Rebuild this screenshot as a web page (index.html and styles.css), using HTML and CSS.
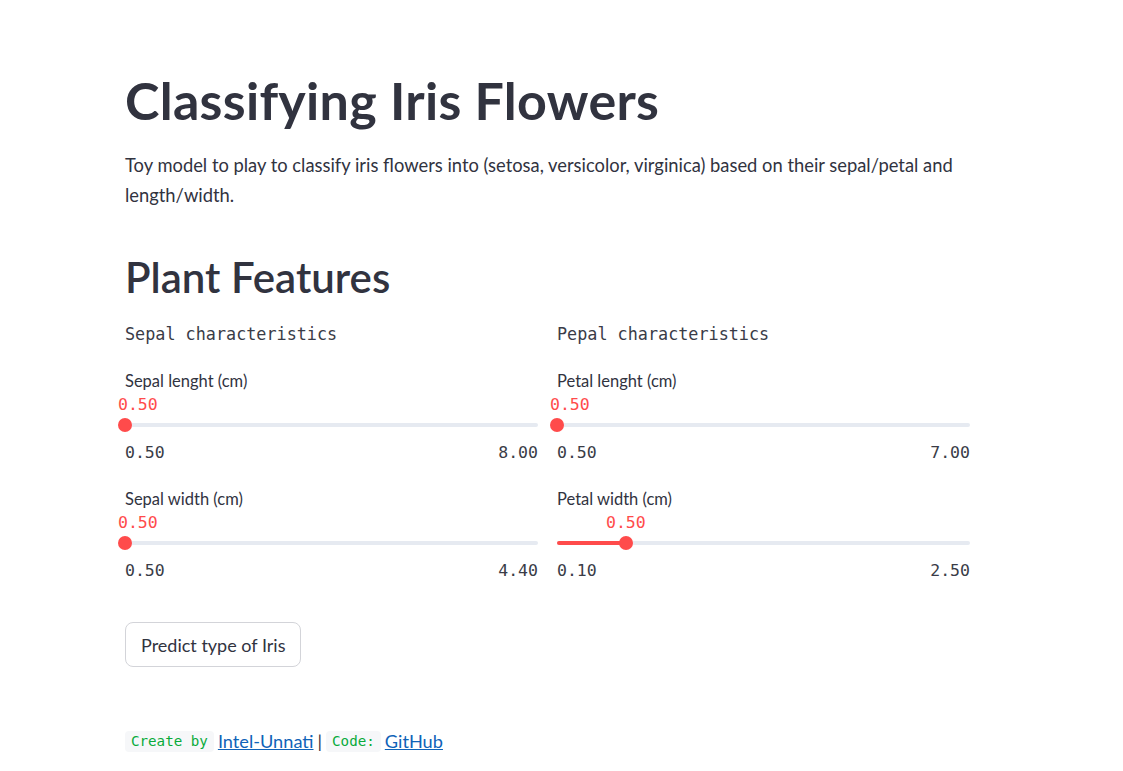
FILE: index.html
```html
<!DOCTYPE html>
<html lang="en">
<head>
<meta charset="utf-8">
<title>Classifying Iris Flowers</title>
<link rel="stylesheet" href="styles.css">
</head>
<body>
<main class="main">
  <h1 class="title">Classifying Iris Flowers</h1>
  <p class="intro">Toy model to play to classify iris flowers into (setosa, versicolor, virginica) based on their sepal/petal and length/width.</p>
  <h2 class="subtitle">Plant Features</h2>
  <div class="columns">
    <section class="col">
      <div class="mono-heading">Sepal characteristics</div>
      <div class="field">
        <div class="field-label">Sepal lenght (cm)</div>
        <div class="value-row"><span class="value" style="left:-7px">0.50</span></div>
        <div class="track-wrap">
          <div class="track"></div>
          <div class="fill" style="width:0px"></div>
          <div class="thumb" style="left:0px"></div>
        </div>
        <div class="ticks"><span>0.50</span><span>8.00</span></div>
      </div>
      <div class="field">
        <div class="field-label">Sepal width (cm)</div>
        <div class="value-row"><span class="value" style="left:-7px">0.50</span></div>
        <div class="track-wrap">
          <div class="track"></div>
          <div class="fill" style="width:0px"></div>
          <div class="thumb" style="left:0px"></div>
        </div>
        <div class="ticks"><span>0.50</span><span>4.40</span></div>
      </div>
    </section>
    <section class="col">
      <div class="mono-heading">Pepal characteristics</div>
      <div class="field">
        <div class="field-label">Petal lenght (cm)</div>
        <div class="value-row"><span class="value" style="left:-7px">0.50</span></div>
        <div class="track-wrap">
          <div class="track"></div>
          <div class="fill" style="width:0px"></div>
          <div class="thumb" style="left:0px"></div>
        </div>
        <div class="ticks"><span>0.50</span><span>7.00</span></div>
      </div>
      <div class="field">
        <div class="field-label">Petal width (cm)</div>
        <div class="value-row"><span class="value" style="left:49px">0.50</span></div>
        <div class="track-wrap">
          <div class="track"></div>
          <div class="fill" style="width:69px"></div>
          <div class="thumb" style="left:69px"></div>
        </div>
        <div class="ticks"><span>0.10</span><span>2.50</span></div>
      </div>
    </section>
  </div>
  <button class="btn" type="button">Predict type of Iris</button>
  <footer class="footer">
    <code class="code">Create by</code>
    <a class="link" href="#">Intel-Unnati</a>
    <span class="sep">|</span>
    <code class="code">Code:</code>
    <a class="link" href="#">GitHub</a>
  </footer>
</main>
</body>
</html>
```
FILE: styles.css
```css
html, body {
  margin: 0;
  padding: 0;
  background: #ffffff;
}
body {
  font-family: Lato, "Noto Sans", sans-serif;
  color: #31333f;
}
.main {
  width: 845px;
  margin-left: 125px;
  padding-top: 70px;
  display: flex;
  flex-direction: column;
  align-items: flex-start;
}
.title {
  margin: 0;
  font-size: 52px;
  line-height: 60px;
  font-weight: 700;
  letter-spacing: 0.3px;
}
.intro {
  margin: 20px 0 0;
  font-size: 18.35px;
  line-height: 30px;
}
.subtitle {
  margin: 42px 0 0;
  font-size: 42px;
  line-height: 50px;
  font-weight: 600;
}
.columns {
  margin-top: 20px;
  width: 100%;
  display: grid;
  grid-template-columns: 413px 413px;
  column-gap: 19px;
}
.col {
  display: flex;
  flex-direction: column;
  gap: 24px;
}
.col > .mono-heading {
  margin-bottom: 1px;
}
.mono-heading {
  font-family: "DejaVu Sans Mono", "Liberation Mono", monospace;
  font-size: 16.8px;
  line-height: 24px;
  color: #3a3c47;
}
.field {
  display: flex;
  flex-direction: column;
}
.field-label {
  font-size: 16.5px;
  line-height: 20px;
  margin-bottom: 4px;
}
.value-row {
  position: relative;
  height: 20px;
}
.value {
  position: absolute;
  top: 0;
  font-family: "DejaVu Sans Mono", "Liberation Mono", monospace;
  font-size: 16.5px;
  line-height: 20px;
  color: #ff4b4b;
}
.track-wrap {
  position: relative;
  height: 20px;
}
.track {
  position: absolute;
  left: 0;
  right: 0;
  top: 8px;
  height: 4px;
  border-radius: 2px;
  background: #e6eaf1;
}
.fill {
  position: absolute;
  left: 0;
  top: 8px;
  height: 4px;
  border-radius: 2px;
  background: #ff4b4b;
}
.thumb {
  position: absolute;
  top: 3px;
  width: 14px;
  height: 14px;
  margin-left: -7px;
  border-radius: 50%;
  background: #ff4b4b;
}
.ticks {
  margin-top: 6px;
  display: flex;
  justify-content: space-between;
  font-family: "DejaVu Sans Mono", "Liberation Mono", monospace;
  font-size: 16.5px;
  line-height: 24px;
  color: #3a3c47;
}
.btn {
  margin-top: 39px;
  height: 45px;
  padding: 0 15px;
  border: 1px solid #d3d4d9;
  border-radius: 8px;
  background: #ffffff;
  font-family: Lato, "Noto Sans", sans-serif;
  font-size: 18px;
  color: #31333f;
}
.footer {
  margin-top: 60px;
  display: flex;
  align-items: center;
  gap: 4px;
  font-size: 18.2px;
  line-height: 28px;
}
.code {
  font-family: "DejaVu Sans Mono", "Liberation Mono", monospace;
  font-size: 14.2px;
  line-height: 21px;
  padding: 0 6px;
  border-radius: 4px;
  background: #f6f7f9;
  color: #09ab3b;
}
.link {
  color: #0f63b8;
  text-decoration: underline;
}
.sep {
  color: #31333f;
}
```
